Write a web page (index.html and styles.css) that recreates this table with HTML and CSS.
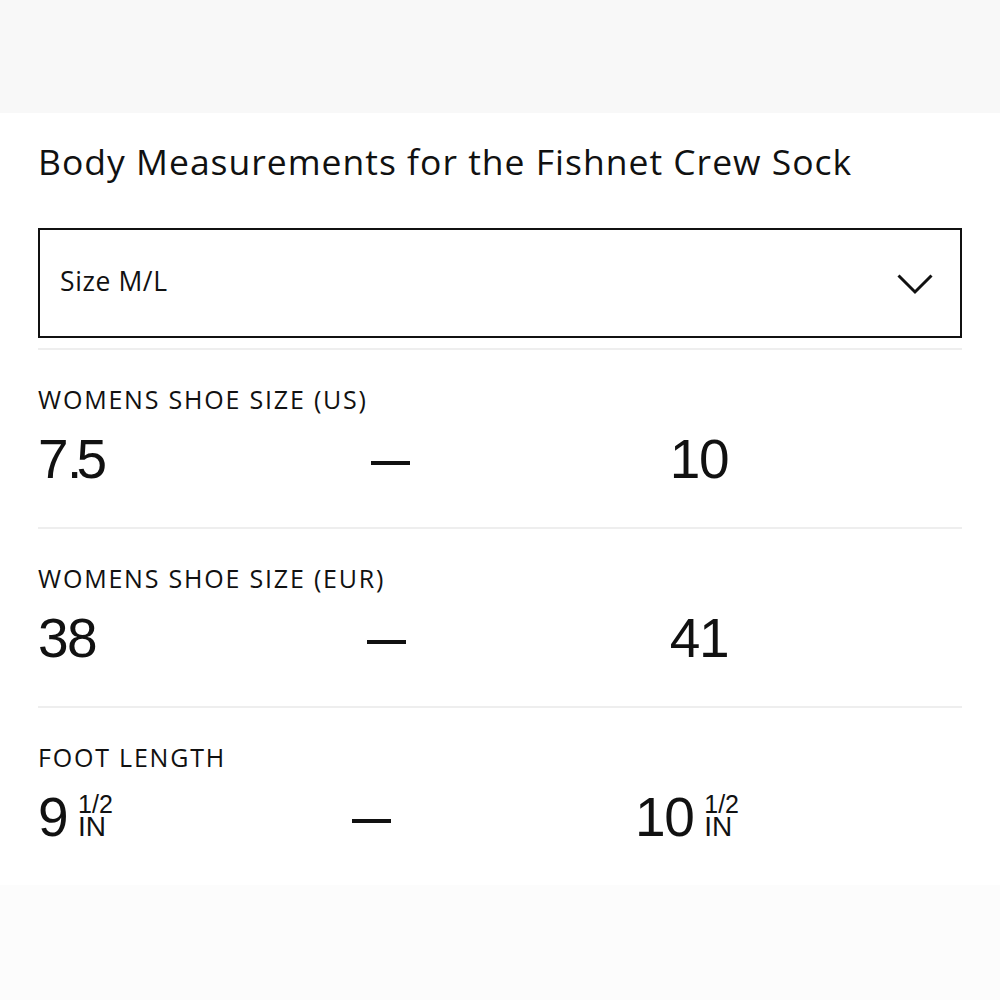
FILE: index.html
```html
<!DOCTYPE html>
<html lang="en">
<head>
<meta charset="utf-8">
<title>Body Measurements</title>
<link rel="stylesheet" href="styles.css">
</head>
<body>
<div class="band band-top"></div>
<main class="panel">
  <h1 class="title">Body Measurements for the Fishnet Crew Sock</h1>
  <div class="select">
    <span class="select-label">Size M/L</span>
    <svg class="chevron" width="36" height="21" viewBox="0 0 36 21" aria-hidden="true">
      <polyline points="1.5,1.5 18,18 34.5,1.5" fill="none" stroke="#111" stroke-width="3"/>
    </svg>
  </div>
  <section class="row">
    <div class="row-label">WOMENS SHOE SIZE (US)</div>
    <div class="values">
      <span class="val">7<span class="pt">.</span>5</span>
      <span class="dash" role="img" aria-label="to"></span>
      <span class="val">10</span>
    </div>
  </section>
  <section class="row">
    <div class="row-label">WOMENS SHOE SIZE (EUR)</div>
    <div class="values">
      <span class="val">38</span>
      <span class="dash" role="img" aria-label="to"></span>
      <span class="val">41</span>
    </div>
  </section>
  <section class="row">
    <div class="row-label">FOOT LENGTH</div>
    <div class="values">
      <span class="val">9<span class="frac"><span class="num">1/2</span><span class="unit">IN</span></span></span>
      <span class="dash" role="img" aria-label="to"></span>
      <span class="val">10<span class="frac"><span class="num">1/2</span><span class="unit">IN</span></span></span>
    </div>
  </section>
</main>
<div class="band band-bottom"></div>
</body>
</html>
```
FILE: styles.css
```css
* { box-sizing: border-box; }
html, body { margin: 0; padding: 0; background: #fff; }
body { color: #111; font-family: "Open Sans", "Liberation Sans", sans-serif; }

.band { height: 113px; }
.band-top { background: #f8f8f8; }
.band-bottom { background: #fcfcfc; height: 115px; }

.panel { background: #fff; padding: 0 38px; height: 772px; }

.title {
  margin: 0;
  padding-top: 28px;
  margin-bottom: 47px;
  font-size: 35.5px;
  line-height: 40px;
  font-weight: 400;
  letter-spacing: 1px;
}

.select {
  height: 110px;
  border: 2px solid #111;
  display: flex;
  align-items: center;
  justify-content: space-between;
  padding: 0 27px 0 20px;
  margin-bottom: 10px;
}
.select-label { font-size: 26.5px; line-height: 30px; letter-spacing: 0.6px; margin-bottom: 5px; }
.chevron { display: block; margin-top: 2px; }

.row {
  border-top: 2px solid #eeeeee;
  height: 179px;
  padding-top: 35px;
}
.row-label {
  font-size: 25px;
  line-height: 28px;
  letter-spacing: 1.8px;
}
.values {
  margin-top: 16px;
  width: 690px;
  display: flex;
  justify-content: space-between;
  align-items: center;
  height: 60px;
  font-family: "Liberation Sans", Arial, sans-serif;
  font-size: 55px;
  line-height: 60px;
  letter-spacing: -1.5px;
}
.val { display: inline-flex; align-items: flex-end; }
.pt { letter-spacing: -6px; }
.dash {
  display: inline-block;
  width: 39px;
  height: 4px;
  background: #111;
  margin-top: 8px;
  margin-left: 6px;
}
.frac {
  display: inline-flex;
  flex-direction: column;
  align-items: flex-start;
  letter-spacing: 0;
  margin-left: 11px;
  margin-right: -11px;
  margin-bottom: 9px;
}
.num { font-size: 25px; line-height: 23px; }
.unit { font-size: 28px; line-height: 22px; }
```
